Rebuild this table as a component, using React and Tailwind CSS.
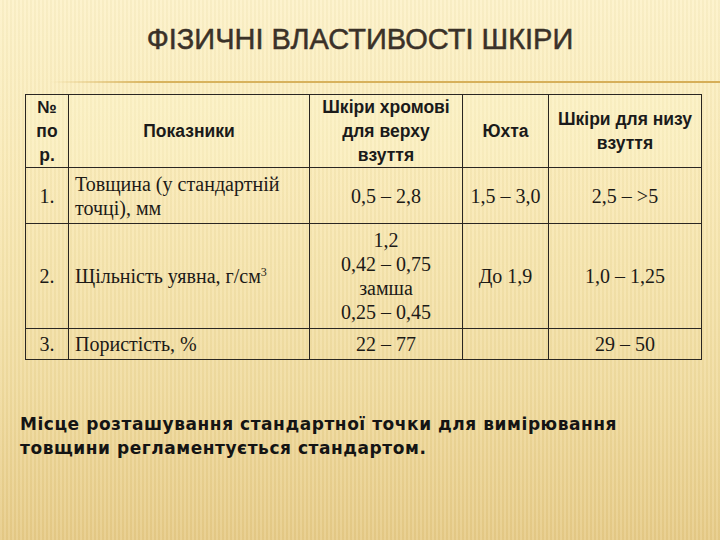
export default function App() {
  const head = "font-['Liberation_Sans',Arial,sans-serif] font-bold text-[17.5px] leading-[24px] text-[#1a1a1a]";
  const cell = "border border-[#2a2622] text-center align-middle";

  return (
    <div className="w-[720px] h-[540px] overflow-hidden bg-[linear-gradient(180deg,#fdf2c8_0%,#f9e9b4_35%,#f1dc9f_70%,#e7cb86_100%)] relative">
      <div className="absolute inset-0 bg-[repeating-linear-gradient(90deg,rgba(255,255,255,0.10)_0px,rgba(255,255,255,0.10)_2px,rgba(0,0,0,0.02)_2px,rgba(0,0,0,0.02)_4px)]" />
      <div className="relative flex flex-col">
        <h1 className="pt-[21px] h-[81px] text-center font-['Liberation_Sans',Arial,sans-serif] text-[29px] leading-[36px] text-[#3a3128] [-webkit-text-stroke:0.5px_#3a3128]">
          ФІЗИЧНІ ВЛАСТИВОСТІ ШКІРИ
        </h1>
        <div className="ml-[50px] h-[2px] bg-[linear-gradient(90deg,rgba(214,176,90,0)_0%,#d8b35e_15%,#d6ae58_100%)]" />

        <table className="mt-[11px] ml-[25px] w-[676px] border-collapse table-fixed font-['Liberation_Serif','Times_New_Roman',serif] text-[20px] leading-[24px] text-[#1c1a17]">
          <colgroup>
            <col className="w-[43px]" />
            <col className="w-[241px]" />
            <col className="w-[153px]" />
            <col className="w-[86px]" />
            <col className="w-[153px]" />
          </colgroup>
          <tbody>
            <tr className="h-[73px] bg-[rgba(255,250,210,0.25)]">
              <td className={`${cell} ${head}`}>
                №<br />по<br />р.
              </td>
              <td className={`${cell} ${head}`}>Показники</td>
              <td className={`${cell} ${head}`}>
                Шкіри хромові<br />для верху<br />взуття
              </td>
              <td className={`${cell} ${head}`}>Юхта</td>
              <td className={`${cell} ${head}`}>
                Шкіри для низу<br />взуття
              </td>
            </tr>
            <tr className="h-[56px]">
              <td className={cell}>1.</td>
              <td className={`${cell} text-left pl-[6px]`}>
                Товщина (у стандартній<br />точці), мм
              </td>
              <td className={cell}>0,5 – 2,8</td>
              <td className={cell}>1,5 – 3,0</td>
              <td className={cell}>2,5 – &gt;5</td>
            </tr>
            <tr className="h-[105px]">
              <td className={cell}>2.</td>
              <td className={`${cell} text-left pl-[6px]`}>
                Щільність уявна, г/см<span className="text-[12px] leading-none relative -top-[7px]">3</span>
              </td>
              <td className={cell}>
                1,2<br />0,42 – 0,75<br />замша<br />0,25 – 0,45
              </td>
              <td className={cell}>До 1,9</td>
              <td className={cell}>1,0 – 1,25</td>
            </tr>
            <tr className="h-[31px]">
              <td className={cell}>3.</td>
              <td className={`${cell} text-left pl-[6px]`}>Пористість, %</td>
              <td className={cell}>22 – 77</td>
              <td className={cell}></td>
              <td className={cell}>29 – 50</td>
            </tr>
          </tbody>
        </table>

        <p className="mt-[52px] ml-[20px] font-['DejaVu_Sans',Verdana,sans-serif] font-bold text-[17px] leading-[24px] tracking-[0.55px] text-[#141414]">
          Місце розташування стандартної точки для вимірювання<br />
          товщини регламентується стандартом.
        </p>
      </div>
    </div>
  );
}
